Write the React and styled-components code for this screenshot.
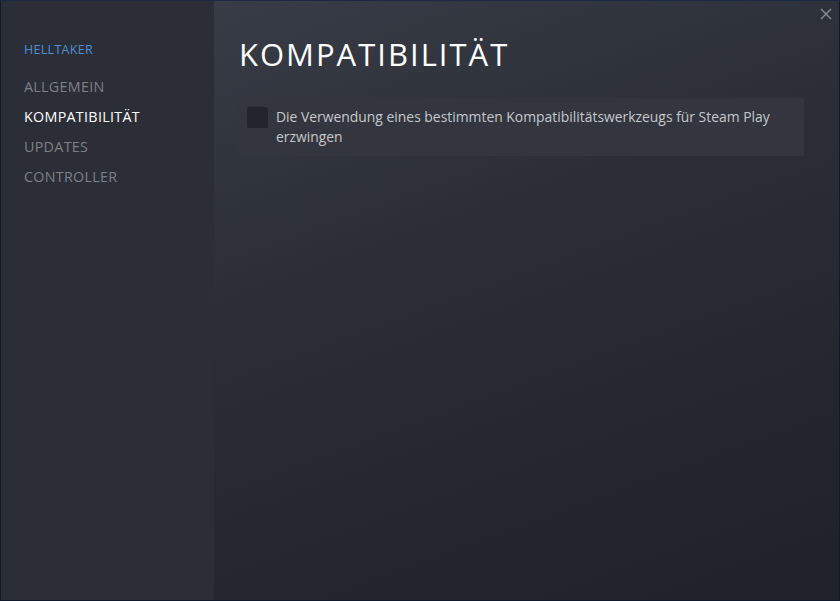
import React from 'react';
import styled, { createGlobalStyle } from 'styled-components';

const Global = createGlobalStyle`
    html, body {
        margin: 0;
        padding: 0;
        background: #0e1726;
    }
    * { box-sizing: border-box; }
`;

const Window = styled.div`
    display: flex;
    width: 840px;
    height: 601px;
    border: 1px solid #101a2b;
    border-top-color: #1b2a44;
    overflow: hidden;
    position: relative;
    font-family: "Open Sans", "Noto Sans", sans-serif;
`;

const Sidebar = styled.nav`
    display: flex;
    flex-direction: column;
    width: 213px;
    flex-shrink: 0;
    padding: 40px 0 0 23px;
    background: #2b2e36;
`;

const GameName = styled.div`
    font-size: 12.5px;
    color: #4c8fd6;
    letter-spacing: 0.3px;
    height: 18px;
    line-height: 18px;
    margin-bottom: 13px;
`;

const NavItem = styled.div`
    font-size: 14.3px;
    line-height: 30px;
    letter-spacing: 0.3px;
    color: ${(p) => (p.$active ? '#ffffff' : '#7d8087')};
    cursor: pointer;
`;

const Main = styled.main`
    flex: 1;
    padding: 33px 35px 0 24px;
    background: linear-gradient(160deg, #383c46 0%, #2c2f38 35%, #23262d 75%, #202229 100%);
`;

const Title = styled.h1`
    margin: 0 0 24px 1px;
    font-size: 31px;
    font-weight: 400;
    letter-spacing: 2px;
    color: #ffffff;
    line-height: 40px;
`;

const OptionRow = styled.label`
    display: flex;
    align-items: flex-start;
    gap: 8px;
    padding: 9px 20px 9px 9px;
    background: #33363f;
    border-radius: 2px;
    cursor: pointer;
`;

const Box = styled.span`
    width: 21px;
    height: 21px;
    flex-shrink: 0;
    background: #22252c;
    border-radius: 2px;
`;

const OptionText = styled.span`
    font-size: 13.9px;
    line-height: 20px;
    color: #c5c8cd;
`;

const Close = styled.button`
    position: absolute;
    top: 6px;
    right: 6px;
    width: 14px;
    height: 14px;
    padding: 0;
    border: none;
    background: none;
    cursor: pointer;
`;

const App = () => {
    return (
        <>
            <Global />
            <Window>
                <Sidebar>
                    <GameName>HELLTAKER</GameName>
                    <NavItem>ALLGEMEIN</NavItem>
                    <NavItem $active>KOMPATIBILITÄT</NavItem>
                    <NavItem>UPDATES</NavItem>
                    <NavItem>CONTROLLER</NavItem>
                </Sidebar>
                <Main>
                    <Title>KOMPATIBILITÄT</Title>
                    <OptionRow>
                        <Box />
                        <OptionText>
                            Die Verwendung eines bestimmten Kompatibilitätswerkzeugs für Steam Play erzwingen
                        </OptionText>
                    </OptionRow>
                </Main>
                <Close aria-label="Schließen">
                    <svg width="14" height="14" viewBox="0 0 14 14">
                        <path d="M2 2 L12 12 M12 2 L2 12" stroke="#8a9099" strokeWidth="1.4" />
                    </svg>
                </Close>
            </Window>
        </>
    );
};

export default App;
